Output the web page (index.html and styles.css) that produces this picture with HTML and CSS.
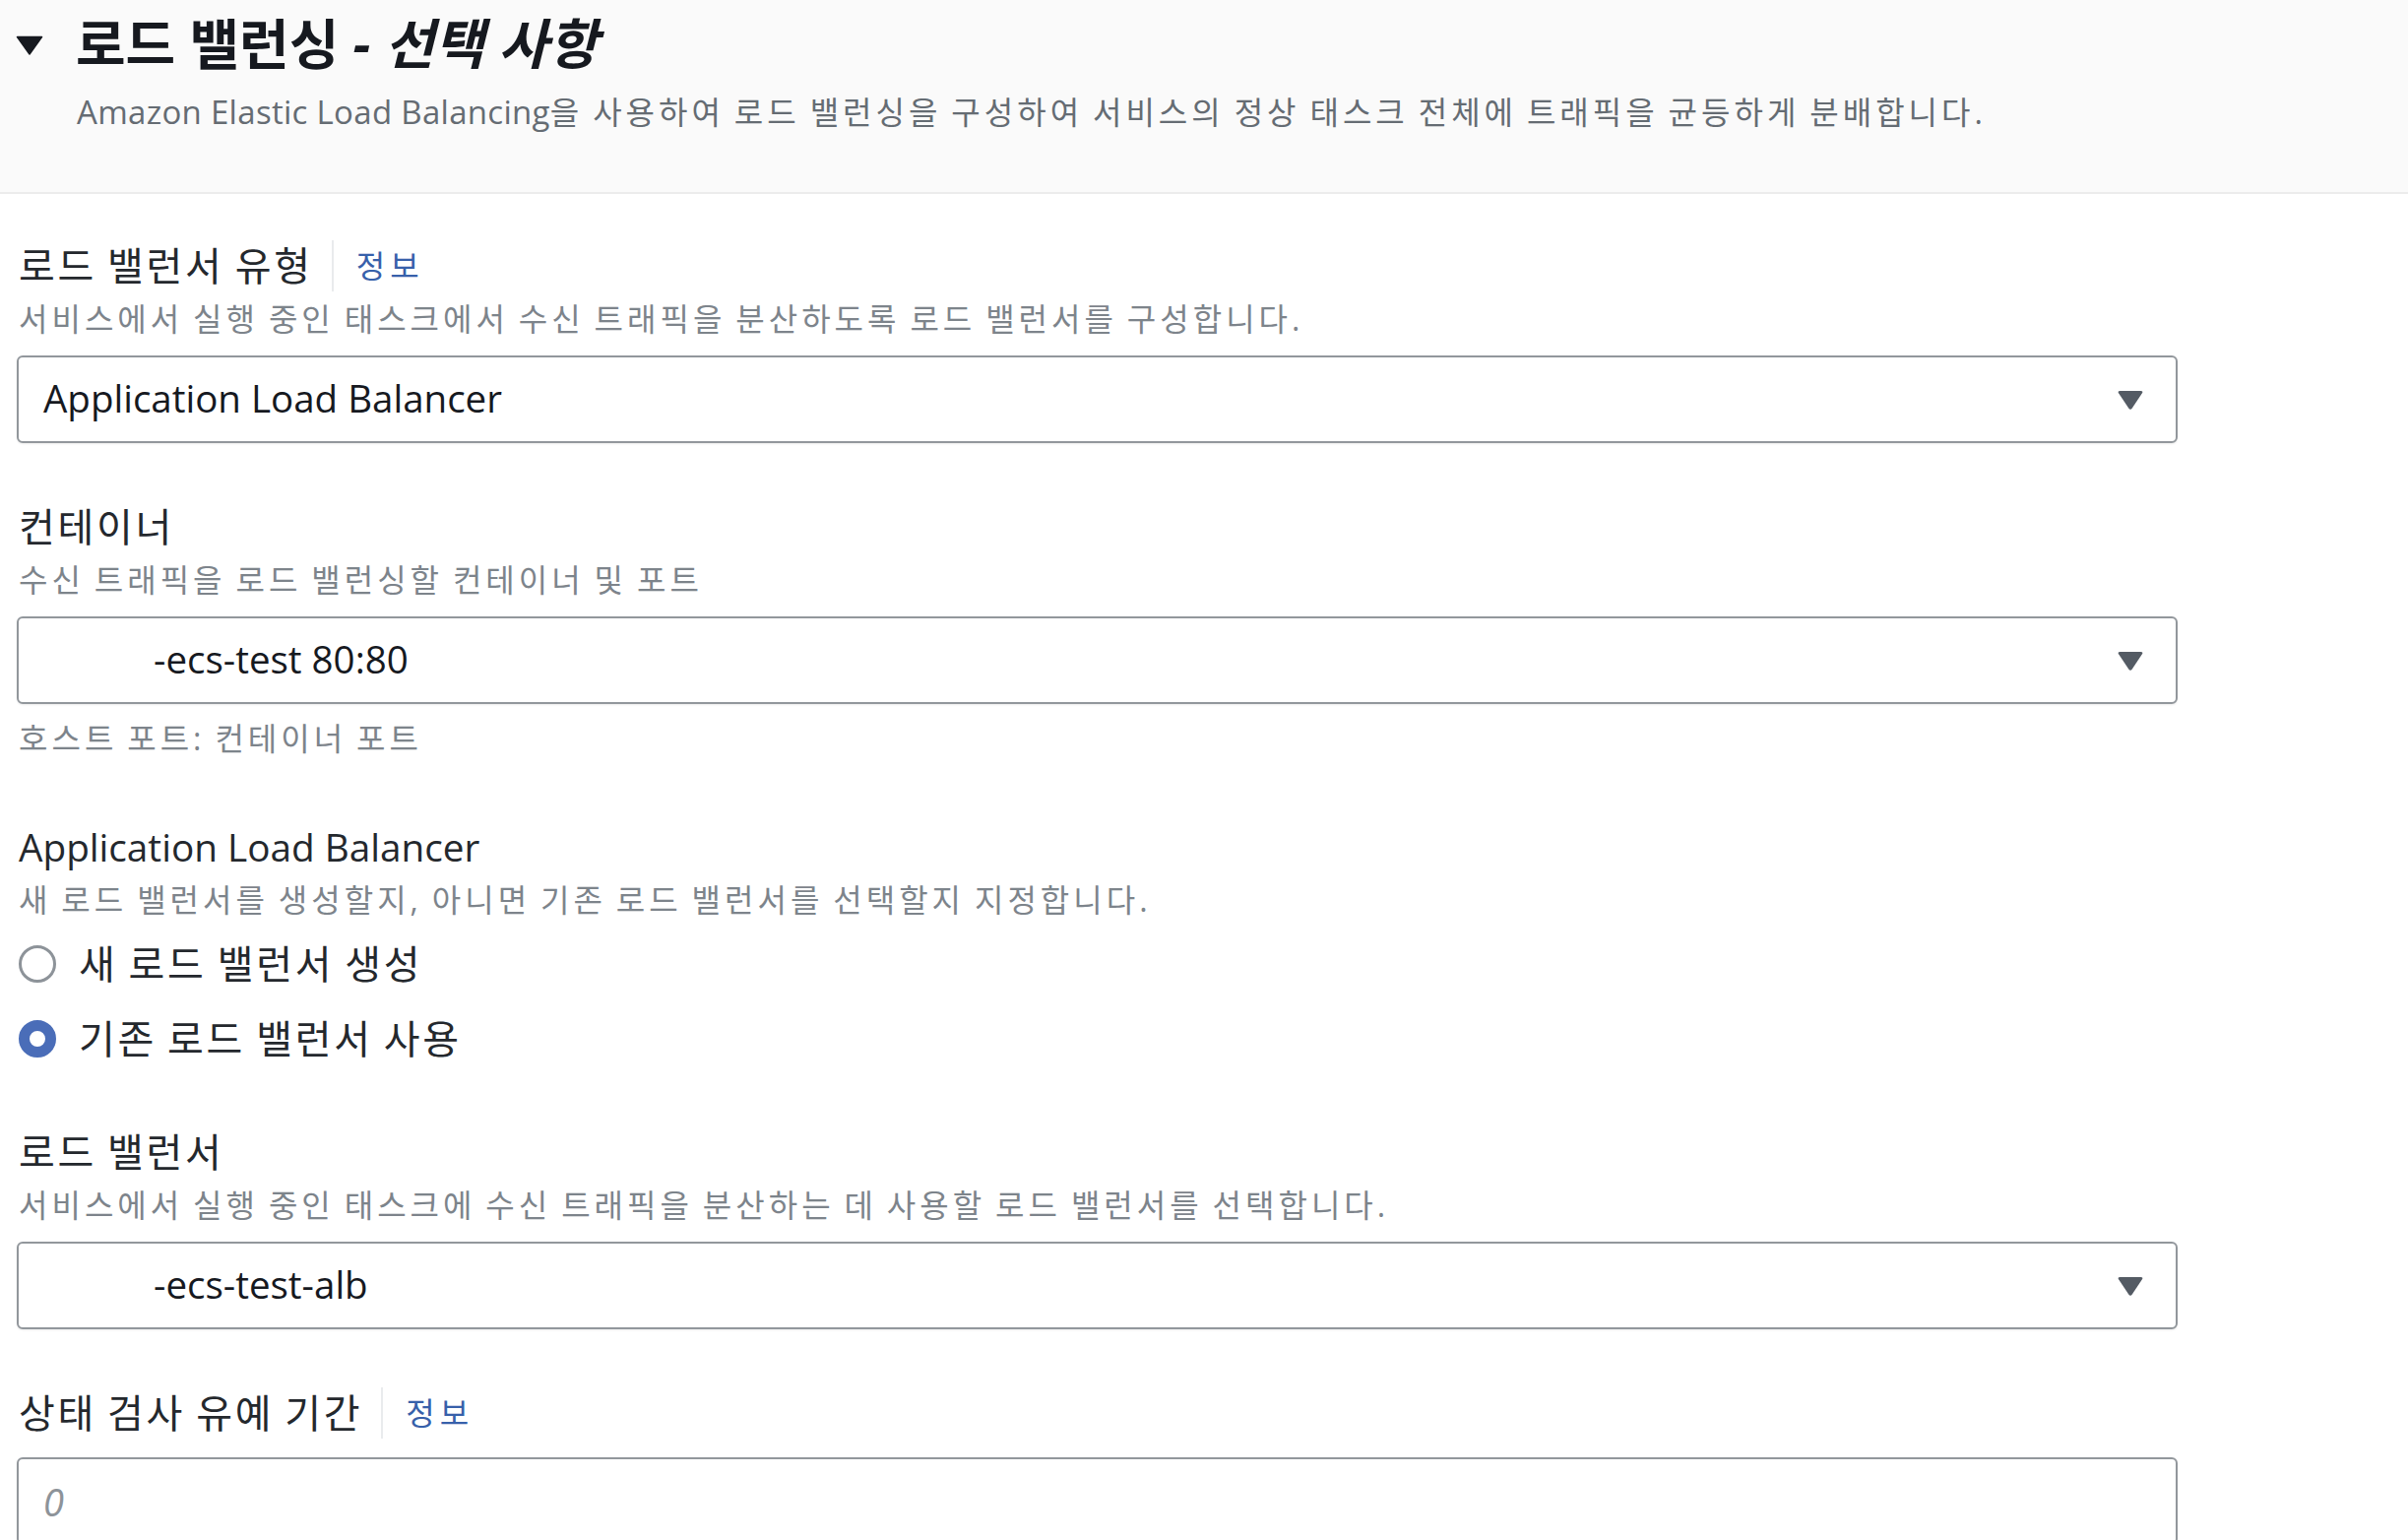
FILE: index.html
```html
<!DOCTYPE html>
<html lang="ko">
<head>
<meta charset="utf-8">
<title>로드 밸런싱 - 선택 사항</title>
<link rel="stylesheet" href="styles.css">
</head>
<body>
<section class="panel">
  <header class="panel-header">
    <div class="title-row">
      <svg class="expand-icon" viewBox="0 0 28 20" aria-hidden="true"><path d="M1.5 1.5 H26.5 L14 19 Z" fill="#16191f" stroke="#16191f" stroke-width="1.5" stroke-linejoin="round"/></svg>
      <h2 class="title">로드 밸런싱 <i class="optional">- 선택 사항</i></h2>
    </div>
    <p class="header-desc"><span class="latin-run">Amazon Elastic Load Balancing</span>을 사용하여 로드 밸런싱을 구성하여 서비스의 정상 태스크 전체에 트래픽을 균등하게 분배합니다.</p>
  </header>

  <div class="form">
    <div class="field">
      <div class="label-row">
        <span class="label">로드 밸런서 유형</span>
        <span class="sep"></span>
        <a class="info">정보</a>
      </div>
      <p class="desc">서비스에서 실행 중인 태스크에서 수신 트래픽을 분산하도록 로드 밸런서를 구성합니다.</p>
      <div class="select">
        <span class="value">Application Load Balancer</span>
        <svg class="caret" viewBox="0 0 28 22" aria-hidden="true"><path d="M3.5 2 H24.5 Q27.5 2 25.8 4.6 L15.8 19.6 Q14 22 12.2 19.6 L2.2 4.6 Q0.5 2 3.5 2 Z" fill="#545b64"/></svg>
      </div>
    </div>

    <div class="field">
      <div class="label-row">
        <span class="label">컨테이너</span>
      </div>
      <p class="desc">수신 트래픽을 로드 밸런싱할 컨테이너 및 포트</p>
      <div class="select">
        <span class="value"><span class="masked"></span>-ecs-test 80:80</span>
        <svg class="caret" viewBox="0 0 28 22" aria-hidden="true"><path d="M3.5 2 H24.5 Q27.5 2 25.8 4.6 L15.8 19.6 Q14 22 12.2 19.6 L2.2 4.6 Q0.5 2 3.5 2 Z" fill="#545b64"/></svg>
      </div>
      <p class="desc constraint">호스트 포트: 컨테이너 포트</p>
    </div>

    <div class="field">
      <div class="label-row">
        <span class="label latin">Application Load Balancer</span>
      </div>
      <p class="desc">새 로드 밸런서를 생성할지, 아니면 기존 로드 밸런서를 선택할지 지정합니다.</p>
      <div class="radio-group">
        <label class="radio">
          <span class="radio-dot"></span>
          <span class="radio-label">새 로드 밸런서 생성</span>
        </label>
        <label class="radio">
          <span class="radio-dot checked"></span>
          <span class="radio-label">기존 로드 밸런서 사용</span>
        </label>
      </div>
    </div>

    <div class="field">
      <div class="label-row">
        <span class="label">로드 밸런서</span>
      </div>
      <p class="desc">서비스에서 실행 중인 태스크에 수신 트래픽을 분산하는 데 사용할 로드 밸런서를 선택합니다.</p>
      <div class="select">
        <span class="value"><span class="masked"></span>-ecs-test-alb</span>
        <svg class="caret" viewBox="0 0 28 22" aria-hidden="true"><path d="M3.5 2 H24.5 Q27.5 2 25.8 4.6 L15.8 19.6 Q14 22 12.2 19.6 L2.2 4.6 Q0.5 2 3.5 2 Z" fill="#545b64"/></svg>
      </div>
    </div>

    <div class="field">
      <div class="label-row">
        <span class="label">상태 검사 유예 기간</span>
        <span class="sep"></span>
        <a class="info">정보</a>
      </div>
      <div class="input">
        <span class="placeholder">0</span>
      </div>
    </div>
  </div>
</section>
</body>
</html>
```

FILE: styles.css
```css
* { box-sizing: border-box; }

html, body {
  margin: 0;
  padding: 0;
  background: #ffffff;
}

body {
  font-family: "Open Sans", "Noto Sans CJK KR", sans-serif;
  color: #16191f;
  overflow: hidden;
}

.panel-header {
  background: #fafafa;
  border-bottom: 2px solid #ececec;
  padding: 13px 0 59px 16px;
}

.title-row {
  display: flex;
  align-items: center;
  gap: 33px;
}

.expand-icon {
  width: 28px;
  height: 20px;
  flex: none;
  margin-top: 4px;
}

.title {
  margin: 0;
  font-size: 55px;
  line-height: 62px;
  font-weight: 700;
  color: #16191f;
}

.optional {
  font-style: italic;
}

.header-desc {
  margin: 17px 0 0 62px;
  font-size: 32px;
  line-height: 44px;
  letter-spacing: 4px;
  word-spacing: -2.4px;
  color: #656c73;
}

.latin-run {
  font-size: 33px;
  letter-spacing: 0.3px;
  word-spacing: 0;
}

.form {
  width: 2195px;
  margin-left: 17px;
  padding-top: 47px;
}

.field + .field {
  margin-top: 59px;
}

.label-row {
  display: flex;
  align-items: center;
  height: 52px;
  padding-left: 2px;
}

.label {
  font-size: 40px;
  line-height: 52px;
  letter-spacing: 2.7px;
  word-spacing: -2px;
  color: #24282d;
}

.label.latin {
  font-size: 38.7px;
  letter-spacing: 0;
  word-spacing: 0;
}

.sep {
  display: block;
  width: 0;
  height: 52px;
  border-left: 2px solid #e9ebed;
  margin: 0 23px 0 19px;
}

.info {
  font-size: 32px;
  line-height: 52px;
  letter-spacing: 5px;
  color: #3760aa;
}

.desc {
  margin: 0;
  padding-left: 2px;
  font-size: 32px;
  line-height: 56px;
  letter-spacing: 4px;
  word-spacing: -2.4px;
  color: #7d848b;
}

.desc.constraint {
  line-height: 44px;
  margin-top: 13px;
  padding-bottom: 3px;
}

.select,
.input {
  display: flex;
  align-items: center;
  height: 89px;
  margin-top: 9px;
  border: 2px solid #92979c;
  border-radius: 6px;
  background: #ffffff;
  box-shadow: 0 1px 2px rgba(0, 0, 0, 0.08);
  padding: 0 32px 0 25px;
}

.select {
  justify-content: space-between;
}

.value {
  font-size: 38.5px;
  line-height: 52px;
  color: #16191f;
  display: flex;
  align-items: center;
  margin-top: -4px;
}

.masked {
  display: inline-block;
  width: 112px;
}

.caret {
  width: 28px;
  height: 22px;
  flex: none;
}

.input {
  margin-top: 19px;
}

.placeholder {
  font-size: 38px;
  font-style: italic;
  color: #8d9399;
}

.radio-group {
  display: flex;
  flex-direction: column;
  gap: 16px;
  margin-top: 7px;
}

.radio {
  display: flex;
  align-items: center;
  height: 60px;
  gap: 23px;
}

.radio-dot {
  width: 38px;
  height: 38px;
  border-radius: 50%;
  border: 3px solid #8d9399;
  background: #ffffff;
  flex: none;
  margin-left: 2px;
}

.radio-dot.checked {
  border: 11px solid #4a6db8;
}

.radio-label {
  font-size: 40px;
  line-height: 52px;
  letter-spacing: 2.7px;
  word-spacing: -2px;
  color: #24282d;
}
```
